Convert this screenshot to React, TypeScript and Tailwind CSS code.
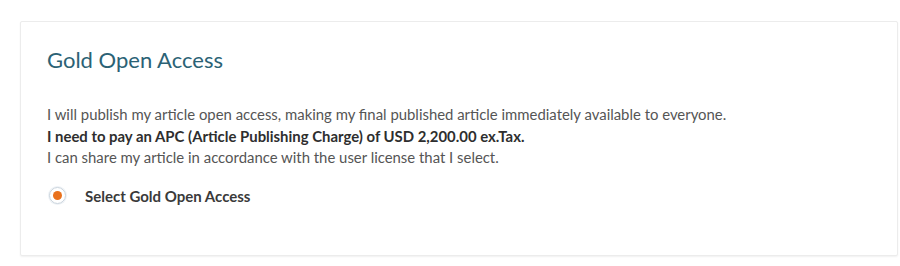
export default function App() {
  return (
    <div className="w-[900px] h-[266px] bg-white pt-[21px] pl-[20px] pr-[2px]" style={{ fontFamily: "Lato, 'Open Sans', sans-serif" }}>
      <div className="h-[235px] border border-[#ececec] rounded-[2px] shadow-[0_1px_2px_rgba(0,0,0,0.06)] bg-white pl-[26px] pt-[24px]">
        <h2 className="text-[22px] leading-[28px] text-[#2b6275] font-normal">Gold Open Access</h2>
        <div className="mt-[30px] text-[14.9px] leading-[21.5px] text-[#555555]">
          <p>I will publish my article open access, making my final published article immediately available to everyone.</p>
          <p className="font-bold text-[#2e2e2e]">I need to pay an APC (Article Publishing Charge) of USD 2,200.00 ex.Tax.</p>
          <p>I can share my article in accordance with the user license that I select.</p>
        </div>
        <label className="mt-[16px] flex items-center gap-[19px]">
          <span className="w-[17px] h-[17px] ml-[2px] rounded-full border border-[#c9d3dc] shadow-[0_0_0_1px_#eef2f6] flex items-center justify-center">
            <span className="w-[9px] h-[9px] rounded-full bg-[#e9711c]" />
          </span>
          <span className="text-[15px] font-bold text-[#3a3a3a]">Select Gold Open Access</span>
        </label>
      </div>
    </div>
  );
}
